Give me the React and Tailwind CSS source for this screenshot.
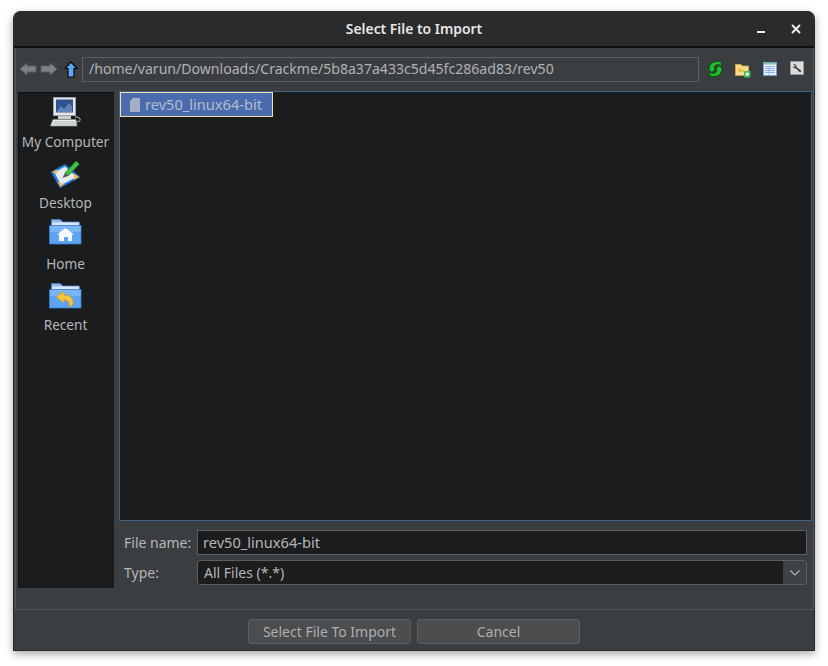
const Back = () => (
  <svg width="18" height="14" viewBox="0 0 18 14"><path d="M1 7 L8 1 V4 H17 V10 H8 V13 Z" fill="#7f8183" stroke="#5f6163" strokeWidth="1" /></svg>
);
const Forward = () => (
  <svg width="18" height="14" viewBox="0 0 18 14"><path d="M17 7 L10 1 V4 H1 V10 H10 V13 Z" fill="#7f8183" stroke="#5f6163" strokeWidth="1" /></svg>
);
const Up = () => (
  <svg width="14" height="17" viewBox="0 0 14 17"><path d="M7 1 L13 7.5 H10 V16 H4 V7.5 H1 Z" fill="#5aa6f4" stroke="#05080c" strokeWidth="1.2" /></svg>
);
const Refresh = () => (
  <svg width="17" height="18" viewBox="0 0 17 18" fill="none">
    <path d="M2 9 C2 3 8 0 14 2 L15 6 C11 4 8 4 7 8 H9 L5 12.5 L0.5 8 Z" fill="#1fbf2a" stroke="#0a4a10" strokeWidth="0.9" />
    <path d="M15 9 C15 15 9 18 3 16 L2 12 C6 14 9 14 10 10 H8 L12 5.5 L16.5 10 Z" fill="#1fbf2a" stroke="#0a4a10" strokeWidth="0.9" />
  </svg>
);
const NewFolder = () => (
  <svg width="16" height="15" viewBox="0 0 16 15">
    <path d="M0.5 1.5 H6 L7 3 H13.5 V12.5 H0.5 Z" fill="#f6dd92" stroke="#c9a544" />
    <path d="M3 6 H7 M3 8 H9" stroke="#e9b93f" strokeWidth="1.4" />
    <rect x="9" y="8" width="6.5" height="6.5" rx="1" fill="#3cc25b" />
    <path d="M12.25 9.5 V13 M10.5 11.25 H14" stroke="#fff" strokeWidth="1.4" />
  </svg>
);
const ListView = () => (
  <svg width="14" height="14" viewBox="0 0 14 14">
    <rect x="0.5" y="0.5" width="13" height="13" fill="#e8f0fa" stroke="#6f9fe0" />
    <rect x="1" y="1" width="12" height="1.5" fill="#8bc78b" />
    <path d="M2 4.5 H12 M2 6.5 H12 M2 8.5 H12 M2 10.5 H12 M6 4 V12.5" stroke="#8fb2de" />
  </svg>
);
const Wrench = () => (
  <svg width="14" height="14" viewBox="0 0 14 14">
    <rect x="0.5" y="0.5" width="13" height="13" fill="#dcdcdc" stroke="#9a9a9a" />
    <path d="M3 3.5 C5 2.5 7 4 6.5 6 L11.5 10 L10 11.5 L6 7.5 C4 8 2.5 6 3.5 5 L5 6 L5.5 5 Z" fill="#3a3a3a" />
  </svg>
);
const Computer = () => (
  <svg width="31" height="31" viewBox="0 0 31 31">
    <rect x="3.5" y="0.5" width="22" height="18" fill="#e4e8ea" stroke="#9aa0a4" />
    <rect x="6" y="2.5" width="17" height="13" fill="#2f5392" />
    <path d="M7 14 L11 9 L14 12 L19 6 L22 9 V15 H7 Z" fill="#5f84b4" />
    <rect x="8" y="19" width="13" height="3" fill="#c8ccce" />
    <path d="M0.5 29 L3 22.5 H26 L27 29 Z" fill="#eceeef" stroke="#8a8e90" strokeWidth="0.8" />
    <path d="M4 25 H25 M3 27 H26" stroke="#aeb2b4" />
    <path d="M27 25 C29 24 31 24 30 22 C29 20 27 20 25 20" fill="none" stroke="#c9cccd" />
  </svg>
);
const Desktop = () => (
  <svg width="31" height="29" viewBox="0 0 31 29">
    <path d="M1 12 L15 4 L30 17 L10 28 Z" fill="#2f7fe0" stroke="#1d4f95" />
    <path d="M4.5 12.5 L15 6.5 L26.5 17 L11 25 Z" fill="#e8eaec" />
    <path d="M2 12 L7 9.5 L7 14 Z M24 13.5 L29 17 L24 20 Z M7.5 22 L10.5 27 L14 24 Z" fill="#f0c040" />
    <path d="M15 13 L26 1 L29.5 4 L18 16 Z" fill="#3fc24a" stroke="#1f6f28" strokeWidth="0.8" />
    <path d="M15 13 L12.5 18 L18 16 Z" fill="#55585a" />
  </svg>
);
const Folder = ({ children }) => (
  <svg width="33" height="26" viewBox="0 0 33 26">
    <path d="M2.5 0.5 H11 L14 3 H30.5 V8 H2.5 Z" fill="#8fb9ee" stroke="#4a7fc4" strokeWidth="0.8" />
    <rect x="3" y="3.5" width="27" height="3" fill="#dbe6f5" />
    <path d="M0.5 6.5 H32 V25 H0.5 Z" fill="#5da4f2" stroke="#3e7dd0" strokeWidth="0.8" />
    <rect x="1" y="7" width="30.5" height="6" fill="#79b6f6" />
    {children}
  </svg>
);
const HomeGlyph = () => <path d="M16.5 9 L25 15.5 H23 V22 H19 V18 H15 V22 H10 V15.5 H8 Z" fill="#f7f9fc" />;
const RecentGlyph = () => (
  <path d="M7 14 L15 8 V12 C21 12 25 15 24 21 C23 23 22 24 20 24 C21 20 19 17 15 17 V20 Z" fill="#f2c53d" stroke="#b98d20" strokeWidth="0.6" />
);

const places = [
  { label: "My Computer", icon: <Computer />, cls: "" },
  { label: "Desktop", icon: <Desktop />, cls: "pt-[2px]" },
  { label: "Home", icon: <Folder><HomeGlyph /></Folder>, cls: "" },
  { label: "Recent", icon: <Folder><RecentGlyph /></Folder>, cls: "pt-[3px]" },
];

export default function App() {
  return (
    <div className="h-[666px] w-[828px] bg-white pt-[11px] pl-[13px] font-['Noto_Sans',sans-serif] text-[14px] text-[#b4b6b8]">
      <div className="flex h-[640px] w-[802px] flex-col overflow-hidden rounded-t-lg border-x border-b border-[#2a2b2c] bg-[#3b3e41] shadow-[0_3px_8px_rgba(0,0,0,0.35)]">
        <div className="relative flex h-[37px] shrink-0 items-center justify-center border-b-2 border-[#0e0f10] bg-[#2a2b2c] pt-[1px]">
          <span className="text-[13.9px] font-semibold text-[#e6e6e6]">Select File to Import</span>
          <div className="absolute right-[13px] top-[13px] flex items-center gap-[26px]">
            <div className="mt-[6px] h-[2px] w-[8px] bg-[#eeeeee]" />
            <svg width="10" height="10" viewBox="0 0 10 10"><path d="M1 1 L9 9 M9 1 L1 9" stroke="#eeeeee" strokeWidth="2" /></svg>
          </div>
        </div>

        <div className="ml-px flex min-h-0 flex-1 flex-col border-x border-b border-[#55585a] pl-[1px]">
          <div className="flex h-[43px] shrink-0 items-center pb-[1px] pl-[2px] pr-[8px]">
            <Back />
            <div className="ml-[3px]"><Forward /></div>
            <div className="ml-[6px]"><Up /></div>
            <div className="ml-[4px] flex h-[25px] w-[617px] shrink-0 items-center border border-[#5c5f61] pl-[6px] text-[14.08px] text-[#b0b2b4]">
              /home/varun/Downloads/Crackme/5b8a37a433c5d45fc286ad83/rev50
            </div>
            <div className="ml-[8px]"><Refresh /></div>
            <div className="ml-[11px] mt-[3px]"><NewFolder /></div>
            <div className="ml-[12px]"><ListView /></div>
            <div className="ml-[13px] -mt-[2px]"><Wrench /></div>
          </div>

          <div className="flex min-h-0 flex-1 pb-[21px] pr-[1px]">
            <div className="ml-[1px] mt-[1px] w-[96px] shrink-0 border-l border-t border-[#0f1011] bg-[#1b1c1e]">
              <div className="flex flex-col items-center pr-[2px] pt-[4px]">
                {places.map((p) => (
                  <div key={p.label} className="flex h-[61px] w-full flex-col items-center">
                    <div className={`flex h-[31px] items-start justify-center ${p.cls}`}>{p.icon}</div>
                    <span className="mt-[4px] text-[13.6px] leading-[20px] text-[#b4b6b8]">{p.label}</span>
                  </div>
                ))}
              </div>
            </div>

            <div className="ml-[5px] flex min-w-0 flex-1 flex-col">
              <div className="h-[430px] shrink-0 border border-[#3f6286] bg-[#1b1c1e]">
                <div className="flex h-[25px] w-[153px] items-center border border-[#f3dfae] bg-[#4a6cae] pl-[8px]">
                  <svg width="11" height="14" viewBox="0 0 11 14"><path d="M4 0 H11 V14 H1 V3 Z" fill="#a3afc4" /></svg>
                  <span className="ml-[5px] text-[14.6px] text-[#b4bccb]">rev50_linux64-bit</span>
                </div>
              </div>
              <div className="mt-[9px] flex h-[25px] items-center pl-[5px] pr-[5px]">
                <span className="w-[73px] shrink-0 text-[14px]">File name:</span>
                <div className="flex h-[25px] flex-1 items-center border border-[#5c5f61] bg-[#1b1c1e] pl-[5px] text-[14.6px] text-[#b4b6b8]">rev50_linux64-bit</div>
              </div>
              <div className="mt-[5px] flex h-[25px] items-center pl-[5px] pr-[5px]">
                <span className="w-[73px] shrink-0 text-[14px]">Type:</span>
                <div className="flex h-[25px] flex-1 items-center overflow-hidden rounded-[3px] border border-[#5c5f61] bg-[#1b1c1e] pl-[6px] text-[14px]">
                  <span className="flex-1">All Files (*.*)</span>
                  <div className="flex h-full w-[23px] items-center justify-center bg-[#3f4245]">
                    <svg width="10" height="6" viewBox="0 0 10 6"><path d="M0.5 0.5 L5 5 L9.5 0.5" fill="none" stroke="#b8babc" strokeWidth="1.1" /></svg>
                  </div>
                </div>
              </div>
            </div>
          </div>
        </div>

        <div className="flex h-[40px] shrink-0 items-center justify-center gap-[6px] pt-[2px]">
          <button className="h-[25px] w-[163px] rounded-[3px] border border-[#5c5f61] bg-[#4b4d4f] text-[14px] text-[#adafb1]">Select File To Import</button>
          <button className="h-[25px] w-[163px] rounded-[3px] border border-[#5c5f61] bg-[#4b4d4f] text-[14px] text-[#adafb1]">Cancel</button>
        </div>
      </div>
    </div>
  );
}
